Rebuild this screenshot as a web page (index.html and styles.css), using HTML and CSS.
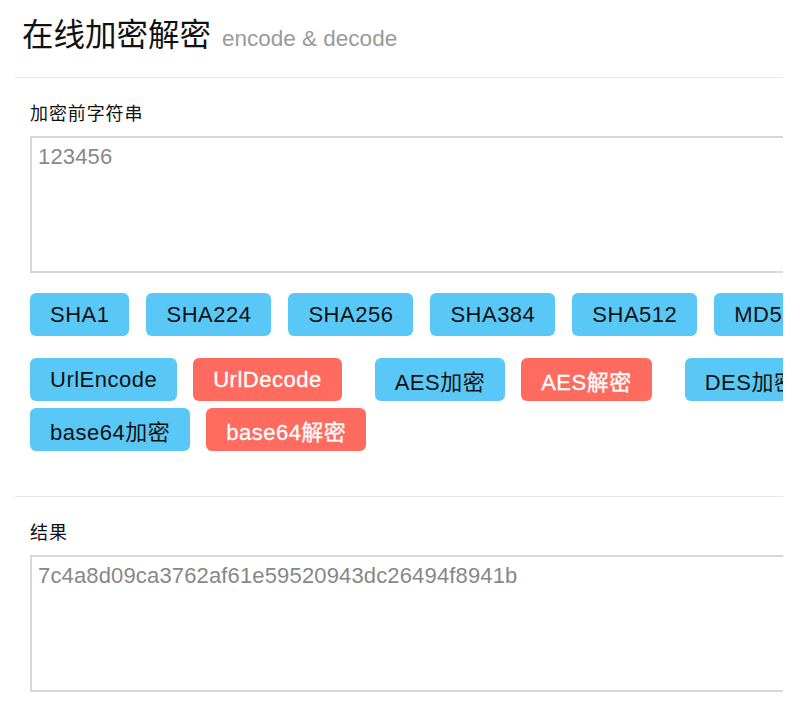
FILE: index.html
```html
<!DOCTYPE html>
<html lang="zh-CN">
<head>
<meta charset="utf-8">
<title>在线加密解密</title>
<link rel="stylesheet" href="styles.css">
</head>
<body>
<div class="page">
  <header class="page-header">
    <h1 class="title">在线加密解密<small class="subtitle">encode &amp; decode</small></h1>
  </header>
  <section class="panel">
    <div class="field">
      <label class="label">加密前字符串</label>
      <div class="box">123456</div>
    </div>
    <div class="btn-row">
      <button class="btn">SHA1</button>
      <button class="btn">SHA224</button>
      <button class="btn">SHA256</button>
      <button class="btn">SHA384</button>
      <button class="btn">SHA512</button>
      <button class="btn">MD5</button>
    </div>
    <div class="btn-groups">
      <div class="group">
        <button class="btn">UrlEncode</button>
        <button class="btn btn-red">UrlDecode</button>
      </div>
      <div class="group">
        <button class="btn">AES加密</button>
        <button class="btn btn-red">AES解密</button>
      </div>
      <div class="group">
        <button class="btn">DES加密</button>
        <button class="btn btn-red">DES解密</button>
      </div>
      <div class="group">
        <button class="btn">base64加密</button>
        <button class="btn btn-red">base64解密</button>
      </div>
    </div>
  </section>
  <section class="panel result">
    <div class="field">
      <label class="label">结果</label>
      <div class="box">7c4a8d09ca3762af61e59520943dc26494f8941b</div>
    </div>
  </section>
</div>
</body>
</html>
```

FILE: styles.css
```css
html, body {
  margin: 0;
  padding: 0;
  background: #fff;
}
body {
  font-family: "Liberation Sans", "Noto Sans CJK SC", sans-serif;
  color: #111;
}
.page {
  width: 783px;
  height: 706px;
  overflow: hidden;
  padding: 0 0 0 15px;
  box-sizing: border-box;
}
.page-header {
  height: 78px;
  border-bottom: 1px solid #e6e6e6;
  padding: 15px 0 0 7px;
  box-sizing: border-box;
}
.title {
  margin: 0;
  font-size: 31.5px;
  font-weight: normal;
  line-height: 40px;
  color: #111;
  white-space: nowrap;
}
.subtitle {
  font-size: 22.5px;
  color: #9a9a9a;
  margin-left: 11px;
  font-weight: normal;
}
.panel {
  padding: 24px 0 0 15px;
  width: 1100px;
}
.panel.result {
  border-top: 1px solid #e6e6e6;
  padding-top: 24px;
  margin-top: 45px;
}
.field {
  display: flex;
  flex-direction: column;
}
.label {
  font-size: 18px;
  letter-spacing: 0.9px;
  line-height: 24px;
  margin-bottom: 10px;
  color: #111;
}
.box {
  width: 900px;
  height: 137px;
  box-sizing: border-box;
  border: 2px solid #d8d8d8;
  padding: 6px 6px;
  font-size: 22px;
  letter-spacing: 0.15px;
  line-height: 26px;
  color: #888;
}
.btn-row {
  display: flex;
  gap: 17px;
  margin-top: 20px;
}
.btn-groups {
  display: flex;
  flex-wrap: wrap;
  width: 1100px;
  column-gap: 33px;
  row-gap: 7px;
  margin-top: 22px;
}
.group {
  display: flex;
  gap: 16px;
}
.btn {
  height: 43px;
  padding: 0 20px;
  border: none;
  border-radius: 6px;
  background: #5ac8f6;
  color: #111;
  font-family: "Liberation Sans", "Noto Sans CJK SC", sans-serif;
  font-size: 22px;
  letter-spacing: 0.5px;
  white-space: nowrap;
  cursor: pointer;
}
.btn-red {
  background: #ff6b5f;
  color: #fff;
  -webkit-text-stroke: 0.3px #fff;
}
```
